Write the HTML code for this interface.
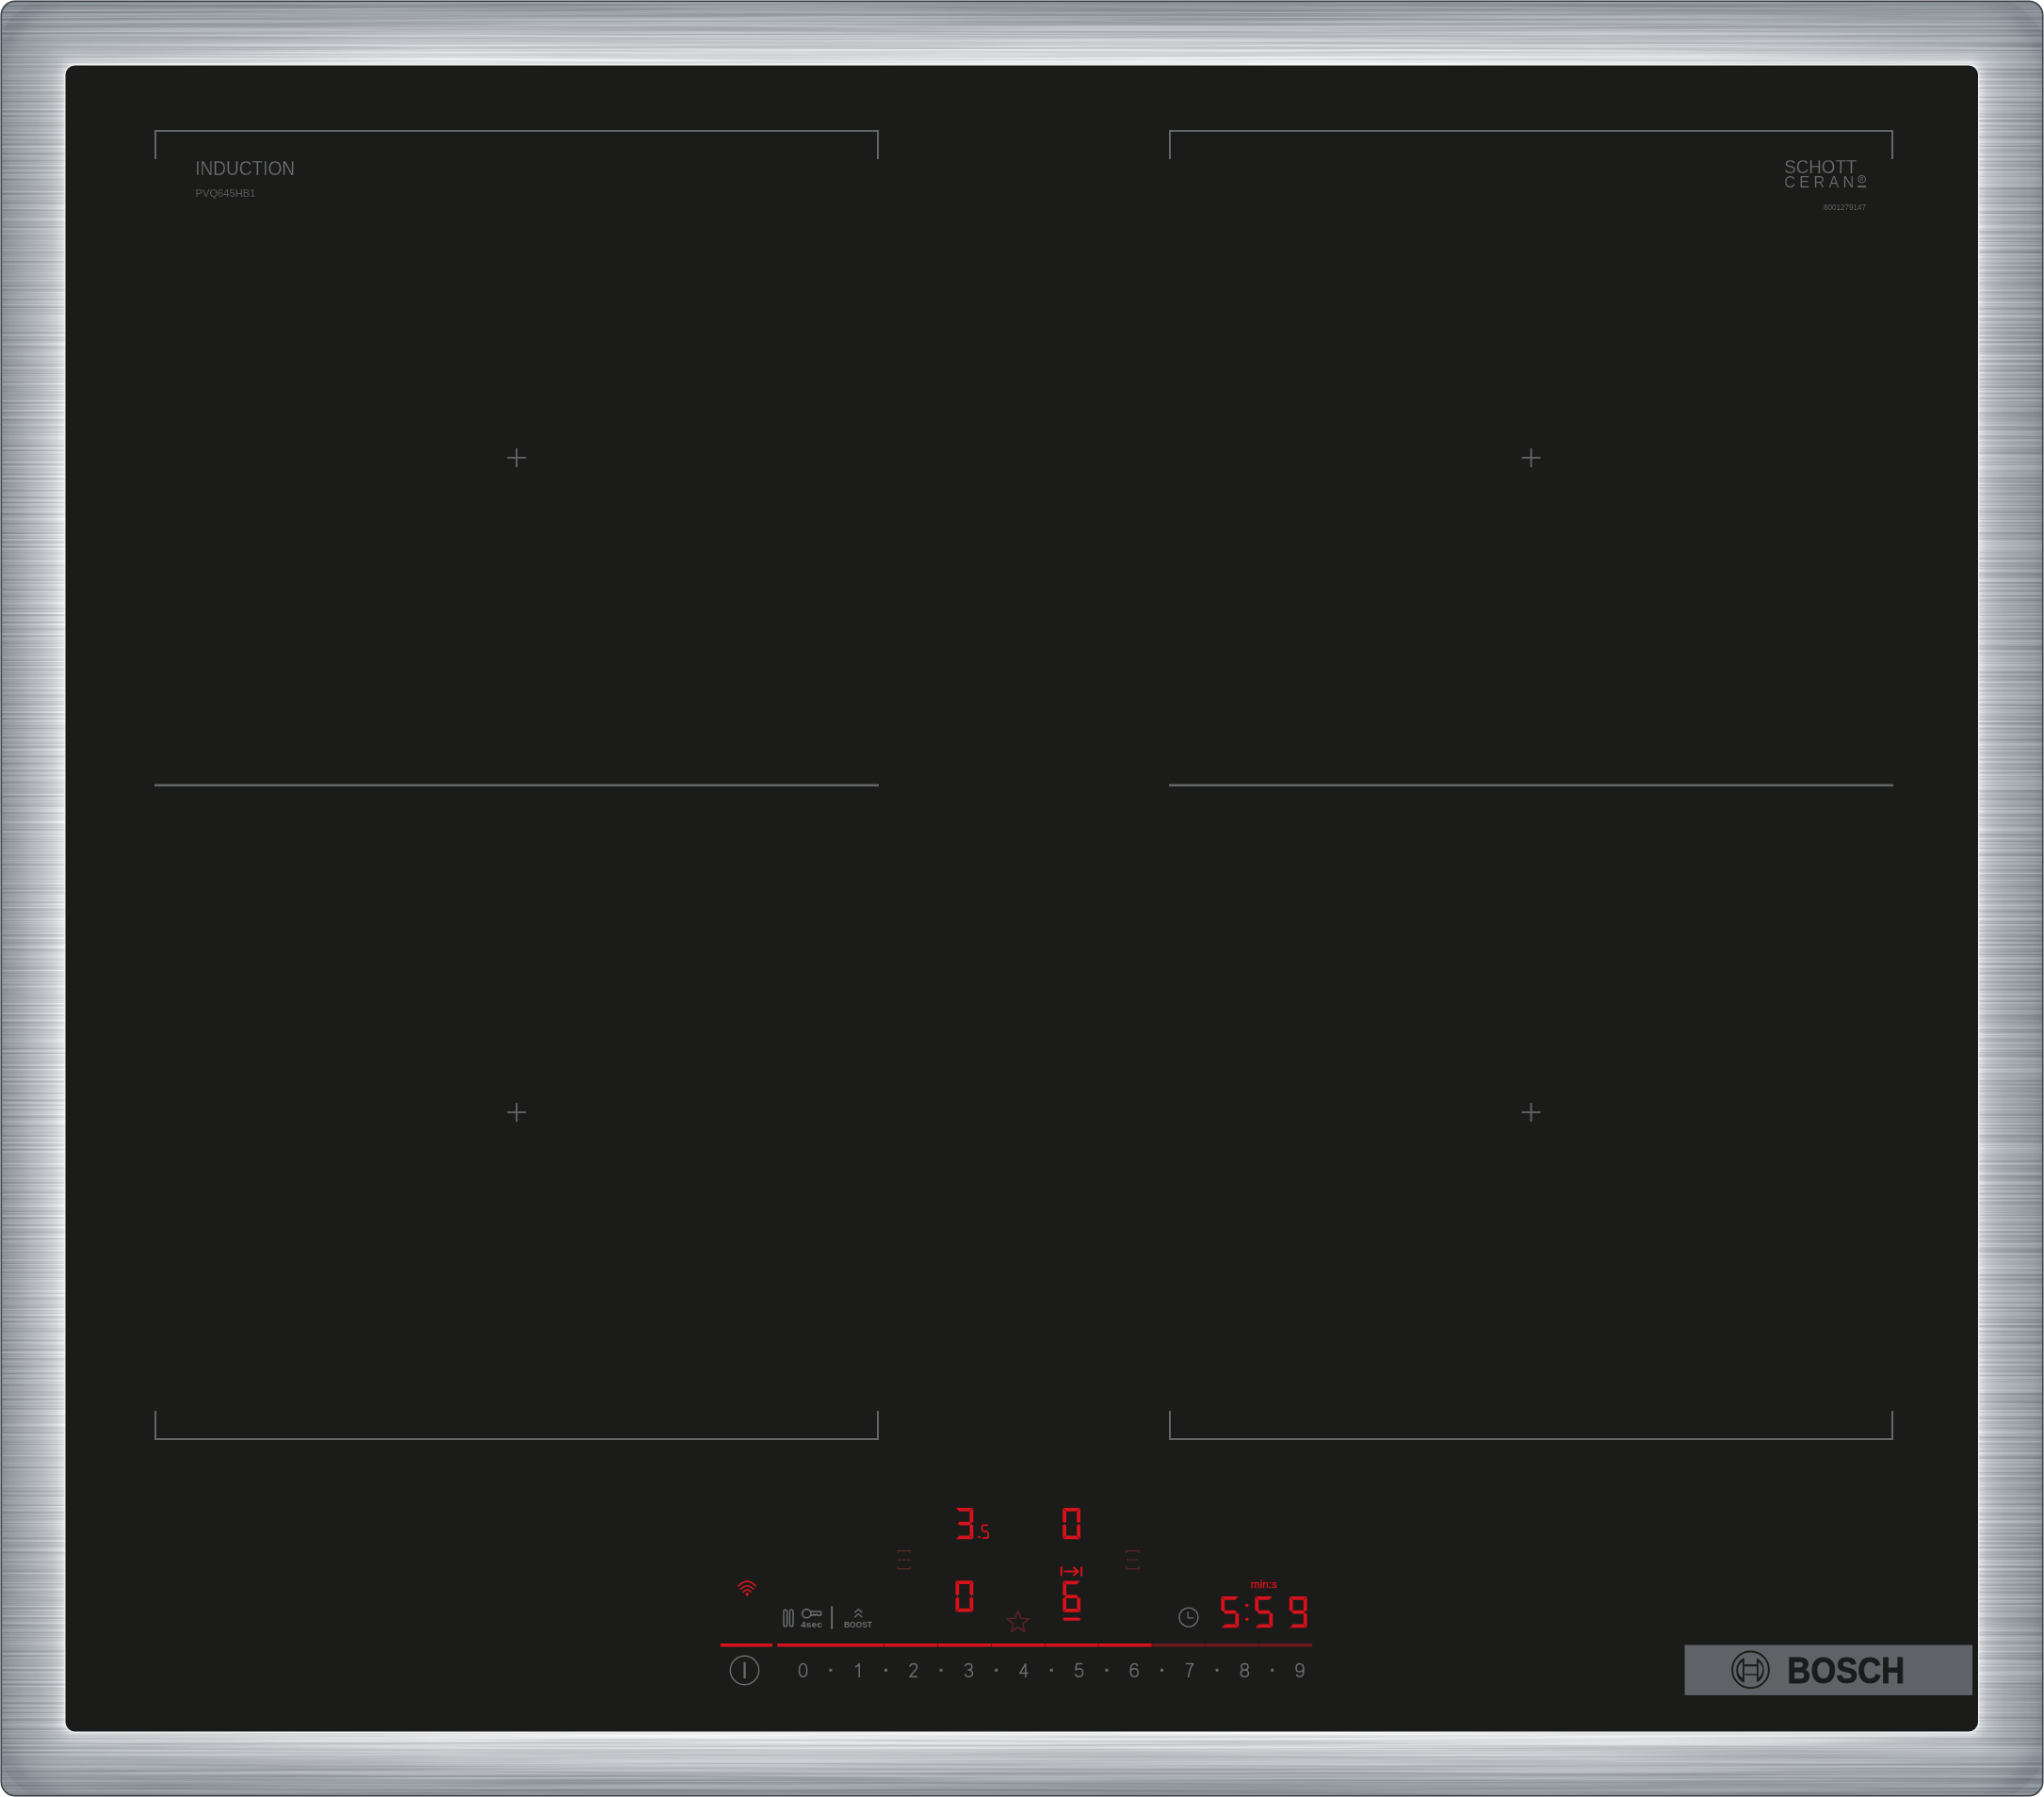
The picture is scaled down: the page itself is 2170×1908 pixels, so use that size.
<!DOCTYPE html>
<html><head><meta charset="utf-8"><title>Induction hob</title>
<style>
html,body{margin:0;padding:0;background:#fff;overflow:hidden;}
svg{display:block;will-change:transform;}
text{font-family:"Liberation Sans", sans-serif;}
</style></head><body>
<svg width="2170" height="1908" viewBox="0 0 2170 1908">
<defs>
 <clipPath id="outer"><rect x="1" y="1" width="2168" height="1906" rx="15" ry="15"/></clipPath>
 <linearGradient id="ovt" gradientUnits="userSpaceOnUse" x1="0" y1="69.5" x2="0" y2="0"><stop offset="0.000" stop-color="#fff" stop-opacity="0.850"/><stop offset="0.057" stop-color="#fff" stop-opacity="0.800"/><stop offset="0.143" stop-color="#fff" stop-opacity="0.600"/><stop offset="0.243" stop-color="#fff" stop-opacity="0.500"/><stop offset="0.357" stop-color="#fff" stop-opacity="0.380"/><stop offset="0.500" stop-color="#fff" stop-opacity="0.300"/><stop offset="0.643" stop-color="#fff" stop-opacity="0.160"/><stop offset="0.786" stop-color="#fff" stop-opacity="0.080"/><stop offset="1.000" stop-color="#fff" stop-opacity="0.020"/></linearGradient>
 <linearGradient id="ovb" gradientUnits="userSpaceOnUse" x1="0" y1="1838.5" x2="0" y2="1908"><stop offset="0.000" stop-color="#fff" stop-opacity="0.850"/><stop offset="0.057" stop-color="#fff" stop-opacity="0.800"/><stop offset="0.143" stop-color="#fff" stop-opacity="0.600"/><stop offset="0.243" stop-color="#fff" stop-opacity="0.500"/><stop offset="0.357" stop-color="#fff" stop-opacity="0.380"/><stop offset="0.500" stop-color="#fff" stop-opacity="0.300"/><stop offset="0.643" stop-color="#fff" stop-opacity="0.160"/><stop offset="0.786" stop-color="#fff" stop-opacity="0.080"/><stop offset="1.000" stop-color="#fff" stop-opacity="0.020"/></linearGradient>
 <linearGradient id="ovl" gradientUnits="userSpaceOnUse" x1="69.5" y1="0" x2="0" y2="0"><stop offset="0.000" stop-color="#fff" stop-opacity="0.637"/><stop offset="0.057" stop-color="#fff" stop-opacity="0.600"/><stop offset="0.143" stop-color="#fff" stop-opacity="0.450"/><stop offset="0.243" stop-color="#fff" stop-opacity="0.375"/><stop offset="0.357" stop-color="#fff" stop-opacity="0.285"/><stop offset="0.500" stop-color="#fff" stop-opacity="0.225"/><stop offset="0.643" stop-color="#fff" stop-opacity="0.120"/><stop offset="0.786" stop-color="#fff" stop-opacity="0.060"/><stop offset="1.000" stop-color="#fff" stop-opacity="0.015"/></linearGradient>
 <linearGradient id="fh" x1="70" y1="0" x2="2100" y2="0" gradientUnits="userSpaceOnUse"><stop offset="0" stop-color="#fff" stop-opacity="0"/><stop offset="0.2" stop-color="#fff" stop-opacity="1"/><stop offset="0.8" stop-color="#fff" stop-opacity="1"/><stop offset="1" stop-color="#fff" stop-opacity="0"/></linearGradient>
 <linearGradient id="fv" x1="0" y1="70" x2="0" y2="1838" gradientUnits="userSpaceOnUse"><stop offset="0" stop-color="#fff" stop-opacity="0"/><stop offset="0.25" stop-color="#fff" stop-opacity="1"/><stop offset="0.75" stop-color="#fff" stop-opacity="1"/><stop offset="1" stop-color="#fff" stop-opacity="0"/></linearGradient>
 <mask id="mh" maskUnits="userSpaceOnUse" x="0" y="0" width="2170" height="1908"><rect x="0" y="0" width="2170" height="1908" fill="url(#fh)"/></mask>
 <mask id="mv" maskUnits="userSpaceOnUse" x="0" y="0" width="2170" height="1908"><rect x="0" y="0" width="2170" height="1908" fill="url(#fv)"/></mask>
 <filter id="brush" x="0" y="0" width="2170" height="1908" filterUnits="userSpaceOnUse" color-interpolation-filters="sRGB">
  <feTurbulence type="fractalNoise" baseFrequency="0.002 0.4" numOctaves="3" seed="11" result="n"/>
  <feColorMatrix in="n" type="matrix" values="2.2 0 0 0 -0.6  2.2 0 0 0 -0.6  2.2 0 0 0 -0.6  0 0 0 0 1"/>
 </filter>
</defs>
<g clip-path="url(#outer)">

<rect x="0" y="0" width="2170" height="1908" fill="rgb(136,144,152)"/>
<rect x="-10.5" y="-10.5" width="2190.5" height="1929" rx="90" fill="rgb(130,137,145)"/>
<rect x="-9.5" y="-9.5" width="2188.5" height="1927" rx="89" fill="rgb(131,138,146)"/>
<rect x="-8.5" y="-8.5" width="2186.5" height="1925" rx="88" fill="rgb(131,138,146)"/>
<rect x="-7.5" y="-7.5" width="2184.5" height="1923" rx="87" fill="rgb(132,139,147)"/>
<rect x="-6.5" y="-6.5" width="2182.5" height="1921" rx="86" fill="rgb(132,139,147)"/>
<rect x="-5.5" y="-5.5" width="2180.5" height="1919" rx="85" fill="rgb(133,140,148)"/>
<rect x="-4.5" y="-4.5" width="2178.5" height="1917" rx="84" fill="rgb(134,140,148)"/>
<rect x="-3.5" y="-3.5" width="2176.5" height="1915" rx="83" fill="rgb(134,141,149)"/>
<rect x="-2.5" y="-2.5" width="2174.5" height="1913" rx="82" fill="rgb(135,142,150)"/>
<rect x="-1.5" y="-1.5" width="2172.5" height="1911" rx="81" fill="rgb(135,142,150)"/>
<rect x="-0.5" y="-0.5" width="2170.5" height="1909" rx="80" fill="rgb(136,143,151)"/>
<rect x="0.5" y="0.5" width="2168.5" height="1907" rx="79" fill="rgb(136,143,151)"/>
<rect x="1.5" y="1.5" width="2166.5" height="1905" rx="78" fill="rgb(137,144,152)"/>
<rect x="2.5" y="2.5" width="2164.5" height="1903" rx="77" fill="rgb(138,146,153)"/>
<rect x="3.5" y="3.5" width="2162.5" height="1901" rx="76" fill="rgb(140,147,155)"/>
<rect x="4.5" y="4.5" width="2160.5" height="1899" rx="75" fill="rgb(142,148,156)"/>
<rect x="5.5" y="5.5" width="2158.5" height="1897" rx="74" fill="rgb(143,150,158)"/>
<rect x="6.5" y="6.5" width="2156.5" height="1895" rx="73" fill="rgb(144,152,159)"/>
<rect x="7.5" y="7.5" width="2154.5" height="1893" rx="72" fill="rgb(146,153,160)"/>
<rect x="8.5" y="8.5" width="2152.5" height="1891" rx="71" fill="rgb(148,154,162)"/>
<rect x="9.5" y="9.5" width="2150.5" height="1889" rx="70" fill="rgb(149,156,163)"/>
<rect x="10.5" y="10.5" width="2148.5" height="1887" rx="69" fill="rgb(150,157,164)"/>
<rect x="11.5" y="11.5" width="2146.5" height="1885" rx="68" fill="rgb(151,158,165)"/>
<rect x="12.5" y="12.5" width="2144.5" height="1883" rx="67" fill="rgb(152,158,165)"/>
<rect x="13.5" y="13.5" width="2142.5" height="1881" rx="66" fill="rgb(152,159,166)"/>
<rect x="14.5" y="14.5" width="2140.5" height="1879" rx="65" fill="rgb(153,160,167)"/>
<rect x="15.5" y="15.5" width="2138.5" height="1877" rx="64" fill="rgb(154,161,168)"/>
<rect x="16.5" y="16.5" width="2136.5" height="1875" rx="63" fill="rgb(155,162,169)"/>
<rect x="17.5" y="17.5" width="2134.5" height="1873" rx="62" fill="rgb(156,162,169)"/>
<rect x="18.5" y="18.5" width="2132.5" height="1871" rx="61" fill="rgb(157,163,170)"/>
<rect x="19.5" y="19.5" width="2130.5" height="1869" rx="60" fill="rgb(158,164,171)"/>
<rect x="20.5" y="20.5" width="2128.5" height="1867" rx="59" fill="rgb(159,165,172)"/>
<rect x="21.5" y="21.5" width="2126.5" height="1865" rx="58" fill="rgb(159,166,173)"/>
<rect x="22.5" y="22.5" width="2124.5" height="1863" rx="57" fill="rgb(160,166,173)"/>
<rect x="23.5" y="23.5" width="2122.5" height="1861" rx="56" fill="rgb(161,167,174)"/>
<rect x="24.5" y="24.5" width="2120.5" height="1859" rx="55" fill="rgb(162,168,175)"/>
<rect x="25.5" y="25.5" width="2118.5" height="1857" rx="54" fill="rgb(163,169,176)"/>
<rect x="26.5" y="26.5" width="2116.5" height="1855" rx="53" fill="rgb(163,169,176)"/>
<rect x="27.5" y="27.5" width="2114.5" height="1853" rx="52" fill="rgb(164,170,177)"/>
<rect x="28.5" y="28.5" width="2112.5" height="1851" rx="51" fill="rgb(165,171,178)"/>
<rect x="29.5" y="29.5" width="2110.5" height="1849" rx="50" fill="rgb(165,171,178)"/>
<rect x="30.5" y="30.5" width="2108.5" height="1847" rx="49" fill="rgb(166,172,179)"/>
<rect x="31.5" y="31.5" width="2106.5" height="1845" rx="48" fill="rgb(167,173,180)"/>
<rect x="32.5" y="32.5" width="2104.5" height="1843" rx="47" fill="rgb(167,173,180)"/>
<rect x="33.5" y="33.5" width="2102.5" height="1841" rx="46" fill="rgb(168,174,181)"/>
<rect x="34.5" y="34.5" width="2100.5" height="1839" rx="45" fill="rgb(169,175,182)"/>
<rect x="35.5" y="35.5" width="2098.5" height="1837" rx="44" fill="rgb(169,175,182)"/>
<rect x="36.5" y="36.5" width="2096.5" height="1835" rx="43" fill="rgb(170,176,183)"/>
<rect x="37.5" y="37.5" width="2094.5" height="1833" rx="42" fill="rgb(171,177,184)"/>
<rect x="38.5" y="38.5" width="2092.5" height="1831" rx="41" fill="rgb(171,177,184)"/>
<rect x="39.5" y="39.5" width="2090.5" height="1829" rx="40" fill="rgb(172,178,185)"/>
<rect x="40.5" y="40.5" width="2088.5" height="1827" rx="39" fill="rgb(173,179,186)"/>
<rect x="41.5" y="41.5" width="2086.5" height="1825" rx="38" fill="rgb(174,180,187)"/>
<rect x="42.5" y="42.5" width="2084.5" height="1823" rx="37" fill="rgb(175,181,188)"/>
<rect x="43.5" y="43.5" width="2082.5" height="1821" rx="36" fill="rgb(177,182,189)"/>
<rect x="44.5" y="44.5" width="2080.5" height="1819" rx="35" fill="rgb(178,183,190)"/>
<rect x="45.5" y="45.5" width="2078.5" height="1817" rx="34" fill="rgb(179,184,191)"/>
<rect x="46.5" y="46.5" width="2076.5" height="1815" rx="33" fill="rgb(180,185,192)"/>
<rect x="47.5" y="47.5" width="2074.5" height="1813" rx="32" fill="rgb(181,187,193)"/>
<rect x="48.5" y="48.5" width="2072.5" height="1811" rx="31" fill="rgb(182,188,194)"/>
<rect x="49.5" y="49.5" width="2070.5" height="1809" rx="30" fill="rgb(183,189,195)"/>
<rect x="50.5" y="50.5" width="2068.5" height="1807" rx="29" fill="rgb(184,190,196)"/>
<rect x="51.5" y="51.5" width="2066.5" height="1805" rx="28" fill="rgb(186,191,197)"/>
<rect x="52.5" y="52.5" width="2064.5" height="1803" rx="27" fill="rgb(187,192,198)"/>
<rect x="53.5" y="53.5" width="2062.5" height="1801" rx="26" fill="rgb(188,193,199)"/>
<rect x="54.5" y="54.5" width="2060.5" height="1799" rx="25" fill="rgb(189,194,200)"/>
<rect x="55.5" y="55.5" width="2058.5" height="1797" rx="24" fill="rgb(191,196,202)"/>
<rect x="56.5" y="56.5" width="2056.5" height="1795" rx="23" fill="rgb(193,198,204)"/>
<rect x="57.5" y="57.5" width="2054.5" height="1793" rx="22" fill="rgb(195,200,205)"/>
<rect x="58.5" y="58.5" width="2052.5" height="1791" rx="21" fill="rgb(197,202,207)"/>
<rect x="59.5" y="59.5" width="2050.5" height="1789" rx="20" fill="rgb(199,204,209)"/>
<rect x="60.5" y="60.5" width="2048.5" height="1787" rx="19" fill="rgb(202,207,212)"/>
<rect x="61.5" y="61.5" width="2046.5" height="1785" rx="18" fill="rgb(206,210,215)"/>
<rect x="62.5" y="62.5" width="2044.5" height="1783" rx="17" fill="rgb(209,214,218)"/>
<rect x="63.5" y="63.5" width="2042.5" height="1781" rx="16" fill="rgb(213,217,221)"/>
<rect x="64.5" y="64.5" width="2040.5" height="1779" rx="15" fill="rgb(216,220,224)"/>
<rect x="65.5" y="65.5" width="2038.5" height="1777" rx="14" fill="rgb(221,225,229)"/>
<rect x="66.5" y="66.5" width="2036.5" height="1775" rx="13" fill="rgb(227,231,234)"/>
<rect x="67.5" y="67.5" width="2034.5" height="1773" rx="12" fill="rgb(232,236,239)"/>
<rect x="68.5" y="68.5" width="2032.5" height="1771" rx="11" fill="rgb(236,240,242)"/>
<rect x="69.5" y="69.5" width="2030.5" height="1769" rx="10" fill="rgb(240,243,246)"/>

 <rect x="0" y="69.5" width="69.5" height="1769" fill="url(#ovl)" mask="url(#mv)"/>
 <rect x="69.5" y="0" width="2031" height="69.5" fill="url(#ovt)" mask="url(#mh)"/>
 <rect x="69.5" y="1838.5" width="2031" height="69.5" fill="url(#ovb)" mask="url(#mh)"/>
 <rect x="0" y="0" width="2170" height="1908" opacity="0.13" filter="url(#brush)"/>
</g>
<rect x="1.25" y="1.25" width="2167.5" height="1905.5" rx="15" ry="15" fill="none" stroke="#3a3f45" stroke-width="1.5"/>
<rect x="68.5" y="68.5" width="2032.5" height="1771" rx="11" ry="11" fill="#f4f6f8"/>
<rect x="69.5" y="69.5" width="2030.5" height="1769" rx="10" ry="10" fill="#1b1b19"/>

<g fill="#636669">
<rect x="164" y="138" width="769" height="2"/>
<rect x="164" y="138" width="2" height="31"/>
<rect x="931" y="138" width="2" height="31"/>
<rect x="164" y="832.5" width="769" height="2.5"/>
<rect x="164" y="1527" width="769" height="2"/>
<rect x="164" y="1498" width="2" height="31"/>
<rect x="931" y="1498" width="2" height="31"/>
<rect x="547.6" y="476" width="1.8" height="20"/>
<rect x="538.5" y="485.1" width="20" height="1.8"/>
<rect x="547.6" y="1171" width="1.8" height="20"/>
<rect x="538.5" y="1180.1" width="20" height="1.8"/>
<rect x="1241" y="138" width="769" height="2"/>
<rect x="1241" y="138" width="2" height="31"/>
<rect x="2008" y="138" width="2" height="31"/>
<rect x="1241" y="832.5" width="769" height="2.5"/>
<rect x="1241" y="1527" width="769" height="2"/>
<rect x="1241" y="1498" width="2" height="31"/>
<rect x="2008" y="1498" width="2" height="31"/>
<rect x="1624.6" y="476" width="1.8" height="20"/>
<rect x="1615.5" y="485.1" width="20" height="1.8"/>
<rect x="1624.6" y="1171" width="1.8" height="20"/>
<rect x="1615.5" y="1180.1" width="20" height="1.8"/>
</g>
<text x="207.2" y="185.5" font-size="21.3" fill="#6e7275" stroke="#1b1b19" stroke-width="0.35" textLength="105.8" lengthAdjust="spacingAndGlyphs">INDUCTION</text>
<text x="207.5" y="209" font-size="10.8" fill="#57595b" textLength="64" lengthAdjust="spacingAndGlyphs">PVQ645HB1</text>
<text x="1894.3" y="184" font-size="20.4" fill="#6a6d70" stroke="#1b1b19" stroke-width="0.25" textLength="77" lengthAdjust="spacingAndGlyphs">SCHOTT</text>
<text x="1894.3" y="198.7" font-size="16.3" fill="#6a6d70" stroke="#1b1b19" stroke-width="0.2" textLength="74" lengthAdjust="spacing">CERAN</text>
<circle cx="1976.6" cy="190.2" r="3.9" fill="none" stroke="#66696c" stroke-width="1"/>
<text x="1976.6" y="192.3" font-size="5.5" fill="#66696c" text-anchor="middle">R</text>
<rect x="1972.2" y="197.2" width="9" height="1.8" fill="#66696c"/>
<text x="1936" y="223" font-size="8.4" fill="#5e6164" textLength="45" lengthAdjust="spacingAndGlyphs">8001279147</text>
<g fill="#d8121c">
<polygon points="1014.95,1601.00 1032.85,1601.00 1029.28,1604.80 1018.52,1604.80"/><polygon points="1029.50,1605.03 1033.30,1601.45 1033.30,1615.25 1031.40,1617.29 1029.50,1615.25"/><polygon points="1016.85,1617.60 1018.52,1615.70 1029.28,1615.70 1030.95,1617.60 1029.28,1619.50 1018.52,1619.50"/><polygon points="1029.50,1619.95 1031.40,1617.91 1033.30,1619.95 1033.30,1633.75 1029.50,1630.17"/><polygon points="1018.52,1630.40 1029.28,1630.40 1032.85,1634.20 1014.95,1634.20"/>
<polygon points="1128.65,1601.00 1146.55,1601.00 1142.98,1604.80 1132.23,1604.80"/><polygon points="1143.20,1605.03 1147.00,1601.45 1147.00,1615.25 1145.10,1617.29 1143.20,1615.25"/><polygon points="1143.20,1619.95 1145.10,1617.91 1147.00,1619.95 1147.00,1633.75 1143.20,1630.17"/><polygon points="1132.23,1630.40 1142.98,1630.40 1146.55,1634.20 1128.65,1634.20"/><polygon points="1128.20,1619.95 1130.10,1617.91 1132.00,1619.95 1132.00,1630.17 1128.20,1633.75"/><polygon points="1128.20,1601.45 1132.00,1605.03 1132.00,1615.25 1130.10,1617.29 1128.20,1615.25"/>
<polygon points="1014.95,1678.30 1032.85,1678.30 1029.28,1682.10 1018.52,1682.10"/><polygon points="1029.50,1682.33 1033.30,1678.75 1033.30,1692.55 1031.40,1694.59 1029.50,1692.55"/><polygon points="1029.50,1697.25 1031.40,1695.21 1033.30,1697.25 1033.30,1711.05 1029.50,1707.47"/><polygon points="1018.52,1707.70 1029.28,1707.70 1032.85,1711.50 1014.95,1711.50"/><polygon points="1014.50,1697.25 1016.40,1695.21 1018.30,1697.25 1018.30,1707.47 1014.50,1711.05"/><polygon points="1014.50,1678.75 1018.30,1682.33 1018.30,1692.55 1016.40,1694.59 1014.50,1692.55"/>
<polygon points="1128.75,1678.50 1146.65,1678.50 1143.08,1682.30 1132.33,1682.30"/><polygon points="1128.30,1678.95 1132.10,1682.53 1132.10,1692.75 1130.20,1694.79 1128.30,1692.75"/><polygon points="1128.30,1697.45 1130.20,1695.41 1132.10,1697.45 1132.10,1707.67 1128.30,1711.25"/><polygon points="1132.33,1707.90 1143.08,1707.90 1146.65,1711.70 1128.75,1711.70"/><polygon points="1143.30,1697.45 1145.20,1695.41 1147.10,1697.45 1147.10,1711.25 1143.30,1707.67"/><polygon points="1130.65,1695.10 1132.33,1693.20 1143.08,1693.20 1144.75,1695.10 1143.08,1697.00 1132.33,1697.00"/>
<polygon points="1296.85,1695.00 1314.75,1695.00 1311.18,1698.80 1300.43,1698.80"/><polygon points="1296.40,1695.45 1300.20,1699.03 1300.20,1709.25 1298.30,1711.29 1296.40,1709.25"/><polygon points="1298.75,1711.60 1300.43,1709.70 1311.18,1709.70 1312.85,1711.60 1311.18,1713.50 1300.43,1713.50"/><polygon points="1311.40,1713.95 1313.30,1711.91 1315.20,1713.95 1315.20,1727.75 1311.40,1724.17"/><polygon points="1300.43,1724.40 1311.18,1724.40 1314.75,1728.20 1296.85,1728.20"/>
<polygon points="1332.85,1695.00 1350.75,1695.00 1347.18,1698.80 1336.43,1698.80"/><polygon points="1332.40,1695.45 1336.20,1699.03 1336.20,1709.25 1334.30,1711.29 1332.40,1709.25"/><polygon points="1334.75,1711.60 1336.43,1709.70 1347.18,1709.70 1348.85,1711.60 1347.18,1713.50 1336.43,1713.50"/><polygon points="1347.40,1713.95 1349.30,1711.91 1351.20,1713.95 1351.20,1727.75 1347.40,1724.17"/><polygon points="1336.43,1724.40 1347.18,1724.40 1350.75,1728.20 1332.85,1728.20"/>
<polygon points="1369.25,1695.00 1387.15,1695.00 1383.58,1698.80 1372.83,1698.80"/><polygon points="1383.80,1699.03 1387.60,1695.45 1387.60,1709.25 1385.70,1711.29 1383.80,1709.25"/><polygon points="1383.80,1713.95 1385.70,1711.91 1387.60,1713.95 1387.60,1727.75 1383.80,1724.17"/><polygon points="1372.83,1724.40 1383.58,1724.40 1387.15,1728.20 1369.25,1728.20"/><polygon points="1368.80,1695.45 1372.60,1699.03 1372.60,1709.25 1370.70,1711.29 1368.80,1709.25"/><polygon points="1371.15,1711.60 1372.83,1709.70 1383.58,1709.70 1385.25,1711.60 1383.58,1713.50 1372.83,1713.50"/>
<polygon points="1042.15,1618.60 1049.75,1618.60 1048.18,1620.30 1043.73,1620.30"/><polygon points="1041.90,1618.85 1043.60,1620.42 1043.60,1625.10 1042.75,1626.02 1041.90,1625.10"/><polygon points="1043.00,1626.20 1043.73,1625.35 1048.18,1625.35 1048.90,1626.20 1048.18,1627.05 1043.73,1627.05"/><polygon points="1048.30,1627.30 1049.15,1626.38 1050.00,1627.30 1050.00,1633.55 1048.30,1631.97"/><polygon points="1043.73,1632.10 1048.18,1632.10 1049.75,1633.80 1042.15,1633.80"/>
<circle cx="1039.6" cy="1632" r="1.3"/>
<circle cx="1323.8" cy="1704.4" r="1.7"/><circle cx="1323.8" cy="1719.3" r="1.7"/>
<rect x="1128.5" y="1717.5" width="18.5" height="3.3" rx="1.6"/>
<rect x="1125.8" y="1663" width="2" height="10.7" rx="1"/><rect x="1147.2" y="1663" width="2" height="10.7" rx="1"/>
<rect x="1129.5" y="1667.5" width="14" height="2" />
</g>
<path d="M1139.5 1664 L1144.5 1668.5 L1139.5 1673" fill="none" stroke="#d8121c" stroke-width="2"/>
<text x="1327.7" y="1686" font-size="11" fill="#d8121c" stroke="#d8121c" stroke-width="0.35" textLength="28.2" lengthAdjust="spacingAndGlyphs">min:s</text>
<g fill="none" stroke="#4d2626" stroke-width="1.6" stroke-linecap="round"><path d="M953 1648.6 V1646.6 H966.5 V1648.6"/><path d="M953 1663.5 V1665.8 H966.5 V1663.5"/><path d="M954 1656.2 H956.5 M958.5 1656.2 H961 M963 1656.2 H965.5"/></g>
<g fill="none" stroke="#4d2626" stroke-width="1.6" stroke-linecap="round"><path d="M1195.5 1648.6 V1646.6 H1209.0 V1648.6"/><path d="M1195.5 1663.5 V1665.8 H1209.0 V1663.5"/><path d="M1196.5 1656.2 H1199.0 M1201.0 1656.2 H1203.5 M1205.5 1656.2 H1208.0"/></g>
<polygon points="1080.80,1710.50 1083.92,1718.21 1092.21,1718.79 1085.84,1724.14 1087.85,1732.21 1080.80,1727.80 1073.75,1732.21 1075.76,1724.14 1069.39,1718.79 1077.68,1718.21" fill="none" stroke="#5c2222" stroke-width="1.6" stroke-linejoin="round"/>
<g fill="none" stroke="#c81820" stroke-width="1.7" stroke-linecap="round">
<path d="M784.2 1683.8 Q793.2 1674.6 802.2 1683.8"/>
<path d="M786.6 1687.2 Q793.2 1680.3 799.8 1687.2"/>
<path d="M789.2 1690.3 Q793.2 1685.4 797.2 1690.3"/>
</g>
<circle cx="793.2" cy="1692.7" r="1.8" fill="#d8121c"/>
<g fill="none" stroke="#6a6d70" stroke-width="1.5">
<rect x="832" y="1709.3" width="3.6" height="17.4" rx="1.8"/>
<rect x="838.4" y="1709.3" width="3.6" height="17.4" rx="1.8"/>
<circle cx="856.3" cy="1713.2" r="4.6" stroke-width="1.6"/>
<path d="M860.4 1711.1 H869.9 A2.05 2.05 0 0 1 869.9 1715.2 H868.3 L866.9 1713.9 L865.5 1715.3 L864.1 1713.9 L862.7 1715.2 H860.6" stroke-linejoin="round"/>
</g>
<rect x="882.2" y="1705.3" width="1.9" height="24.3" fill="#6a6d70"/>
<path d="M907.3 1712.3 L911.3 1708.6 L915.3 1712.3 M907.3 1717.3 L911.3 1713.6 L915.3 1717.3" fill="none" stroke="#6a6d70" stroke-width="1.4"/>
<text x="850" y="1727.9" font-size="9.6" font-weight="bold" fill="#6a6d70" textLength="23" lengthAdjust="spacingAndGlyphs">4sec</text>
<text x="896" y="1727.9" font-size="9.6" font-weight="bold" fill="#6a6d70" textLength="30" lengthAdjust="spacingAndGlyphs">BOOST</text>
<circle cx="1262" cy="1717.1" r="10" fill="none" stroke="#6a6d70" stroke-width="1.4"/>
<path d="M1261.2 1711.3 V1717.9 H1267" fill="none" stroke="#6a6d70" stroke-width="1.3"/>
<rect x="764.8" y="1745" width="55.2" height="3.5" fill="#d8121c"/>
<rect x="825.25" y="1745" width="113.20" height="3.5" fill="#d8121c"/>
<rect x="938.95" y="1745" width="56.35" height="3.5" fill="#d8121c"/>
<rect x="995.80" y="1745" width="56.35" height="3.5" fill="#d8121c"/>
<rect x="1052.65" y="1745" width="56.35" height="3.5" fill="#d8121c"/>
<rect x="1109.50" y="1745" width="56.35" height="3.5" fill="#d8121c"/>
<rect x="1166.35" y="1745" width="56.35" height="3.5" fill="#d8121c"/>
<rect x="1223.20" y="1745" width="56.35" height="3.5" fill="#6b1a1e"/>
<rect x="1280.05" y="1745" width="56.35" height="3.5" fill="#6b1a1e"/>
<rect x="1336.90" y="1745" width="56.35" height="3.5" fill="#6b1a1e"/>
<circle cx="790.5" cy="1773.5" r="15.2" fill="none" stroke="#6a6d70" stroke-width="1.4"/>
<rect x="789.4" y="1764.8" width="2.3" height="17.2" fill="#6a6d70"/>
<g fill="none" stroke="#6a6d70" stroke-width="1.5" stroke-linejoin="round">
<path transform="translate(847.80 1765.8)" d="M4.8 0.75 C2.2 0.75 0.75 3.2 0.75 7.6 C0.75 12.0 2.2 14.45 4.8 14.45 C7.4 14.45 8.85 12.0 8.85 7.6 C8.85 3.2 7.4 0.75 4.8 0.75 Z"/>
<path transform="translate(906.40 1765.8)" d="M1.6 4.2 C3.3 3.4 4.9 2.2 5.8 0.75 V15.2"/>
<path transform="translate(965.00 1765.8)" d="M0.9 3.9 C1.3 1.8 2.8 0.75 4.8 0.75 C7.0 0.75 8.5 2.1 8.5 4.2 C8.5 6.3 7.0 7.7 4.6 9.9 L0.9 14.45 H9.0"/>
<path transform="translate(1023.60 1765.8)" d="M1.0 3.4 C1.6 1.6 3.0 0.75 4.7 0.75 C6.8 0.75 8.2 2.0 8.2 3.9 C8.2 5.9 6.6 7.1 4.2 7.1 C6.9 7.1 8.8 8.5 8.8 10.9 C8.8 13.1 7.0 14.45 4.7 14.45 C2.8 14.45 1.3 13.5 0.8 11.6"/>
<path transform="translate(1082.20 1765.8)" d="M6.6 15.2 V0.9 L0.6 10.8 H9.4"/>
<path transform="translate(1140.80 1765.8)" d="M8.3 0.75 H2.1 L1.3 7.5 C2.2 6.5 3.4 6.0 4.8 6.0 C7.2 6.0 8.8 7.8 8.8 10.2 C8.8 12.7 7.0 14.45 4.6 14.45 C2.6 14.45 1.2 13.4 0.8 11.6"/>
<path transform="translate(1199.40 1765.8)" d="M8.4 3.2 C7.9 1.6 6.6 0.75 4.9 0.75 C2.3 0.75 0.8 3.3 0.8 8.0 C0.8 12.3 2.3 14.45 4.9 14.45 C7.3 14.45 8.8 12.6 8.8 10.1 C8.8 7.6 7.3 6.0 5.0 6.0 C3.0 6.0 1.5 7.2 0.9 8.8"/>
<path transform="translate(1258.00 1765.8)" d="M0.8 0.75 H8.8 C6.0 4.5 4.2 9.0 3.6 15.2"/>
<path transform="translate(1316.60 1765.8)" d="M4.8 7.1 C2.7 7.1 1.2 5.8 1.2 3.9 C1.2 2.0 2.7 0.75 4.8 0.75 C6.9 0.75 8.4 2.0 8.4 3.9 C8.4 5.8 6.9 7.1 4.8 7.1 C2.3 7.1 0.75 8.6 0.75 10.8 C0.75 13.0 2.4 14.45 4.8 14.45 C7.2 14.45 8.85 13.0 8.85 10.8 C8.85 8.6 7.3 7.1 4.8 7.1 Z"/>
<path transform="translate(1375.20 1765.8)" d="M1.2 12.0 C1.7 13.6 3.0 14.45 4.7 14.45 C7.3 14.45 8.8 11.9 8.8 7.2 C8.8 2.9 7.3 0.75 4.7 0.75 C2.3 0.75 0.8 2.6 0.8 5.1 C0.8 7.6 2.3 9.2 4.6 9.2 C6.6 9.2 8.1 8.0 8.7 6.4"/>
</g>
<g fill="#6a6d70">
<rect x="880.4" y="1771.8" width="3" height="3"/>
<rect x="939.0" y="1771.8" width="3" height="3"/>
<rect x="997.6" y="1771.8" width="3" height="3"/>
<rect x="1056.2" y="1771.8" width="3" height="3"/>
<rect x="1114.8" y="1771.8" width="3" height="3"/>
<rect x="1173.4" y="1771.8" width="3" height="3"/>
<rect x="1232.0" y="1771.8" width="3" height="3"/>
<rect x="1290.6" y="1771.8" width="3" height="3"/>
<rect x="1349.2" y="1771.8" width="3" height="3"/>
</g>
<rect x="1788.6" y="1746.6" width="305.4" height="53.3" fill="#5f6367"/>
<circle cx="1858.5" cy="1772.9" r="19.4" fill="none" stroke="#1b1b1b" stroke-width="1.9"/>
<g fill="#1b1b1b">
<path d="M1851.8 1760 A14.8 14.8 0 0 0 1851.8 1786.9 Z"/><path d="M1865.1 1760.5 A14.8 14.8 0 0 1 1865.1 1786.4 Z"/>
<rect x="1851.8" y="1767.2" width="13.3" height="2.1"/><rect x="1851.8" y="1777.3" width="13.3" height="1.4"/>
</g>
<g fill="#5f6367">
<path d="M1850 1764.2 A10.3 10.3 0 0 0 1850 1781.8 Z"/><path d="M1866.9 1764.6 A10.3 10.3 0 0 1 1866.9 1781.4 Z"/>
</g>
<text x="1897.6" y="1786.6" font-size="38.8" font-weight="bold" fill="#1b1b1b" stroke="#1b1b1b" stroke-width="0.9" textLength="124.5" lengthAdjust="spacingAndGlyphs">BOSCH</text>
</svg></body></html>
